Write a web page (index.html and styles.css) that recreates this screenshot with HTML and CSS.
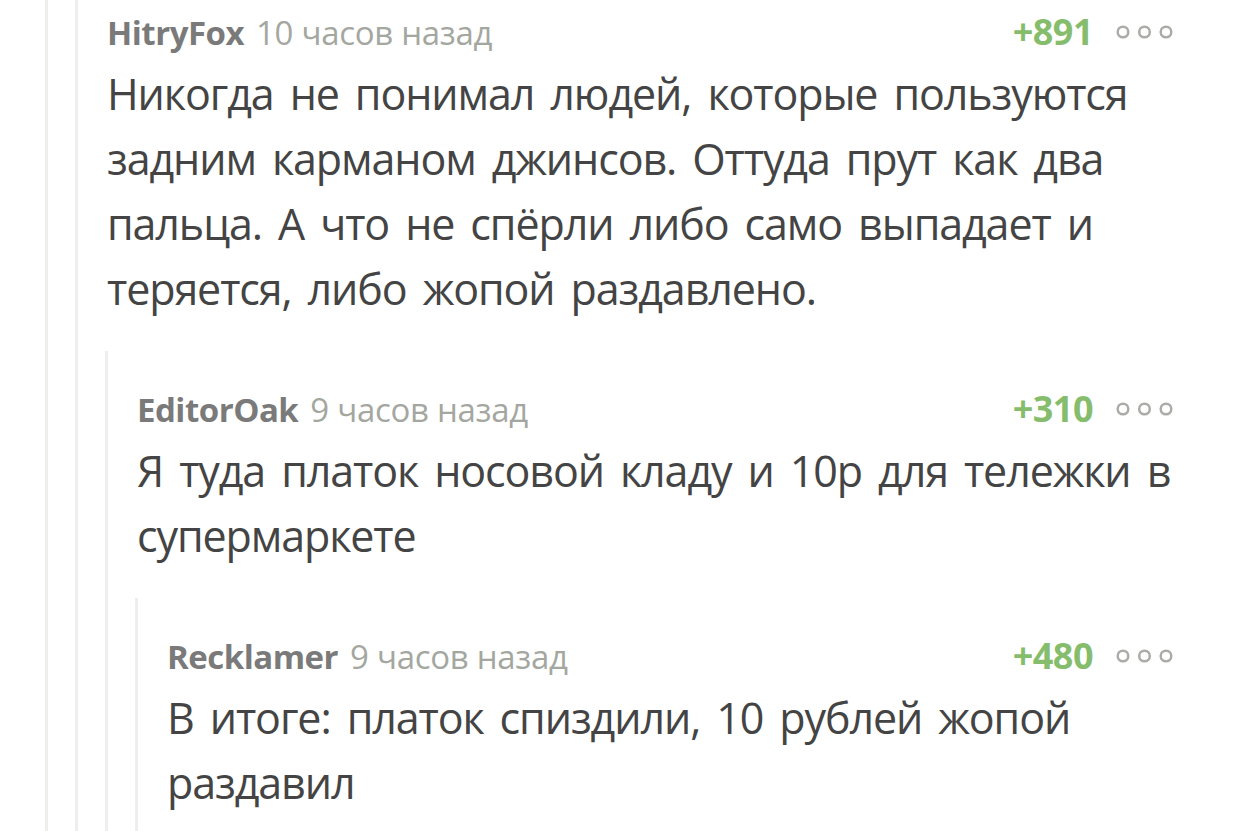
FILE: index.html
```html
<!DOCTYPE html>
<html lang="ru">
<head>
  <meta charset="UTF-8" />
  <meta name="viewport" content="width=device-width, initial-scale=1.0"/>
  <title>Комментарии</title>
  <link rel="stylesheet" href="styles.css">
</head>
<body>
  <div class="page">
    <div class="branch">
      <div class="branch">
        <div class="thread">

          <div class="comment">
            <div class="comment-header">
              <span class="author">HitryFox</span>
              <span class="time">10 часов назад</span>
              <span class="rating">+891</span>
              <svg class="more" width="58" height="16" viewBox="0 0 58 16">
                <circle cx="7" cy="8" r="5.3" />
                <circle cx="28.5" cy="8" r="5.3" />
                <circle cx="50" cy="8" r="5.3" />
              </svg>
            </div>
            <div class="comment-body">Никогда не понимал людей, которые пользуются задним карманом джинсов. Оттуда прут как два пальца. А что не спёрли либо само выпадает и теряется, либо жопой раздавлено.</div>
          </div>

          <div class="branch">
            <div class="comment">
              <div class="comment-header">
                <span class="author">EditorOak</span>
                <span class="time">9 часов назад</span>
                <span class="rating">+310</span>
                <svg class="more" width="58" height="16" viewBox="0 0 58 16">
                  <circle cx="7" cy="8" r="5.3" />
                  <circle cx="28.5" cy="8" r="5.3" />
                  <circle cx="50" cy="8" r="5.3" />
                </svg>
              </div>
              <div class="comment-body">Я туда платок носовой кладу и 10р для тележки в супермаркете</div>
            </div>

            <div class="branch">
              <div class="comment">
                <div class="comment-header">
                  <span class="author">Recklamer</span>
                  <span class="time">9 часов назад</span>
                  <span class="rating">+480</span>
                  <svg class="more" width="58" height="16" viewBox="0 0 58 16">
                    <circle cx="7" cy="8" r="5.3" />
                    <circle cx="28.5" cy="8" r="5.3" />
                    <circle cx="50" cy="8" r="5.3" />
                  </svg>
                </div>
                <div class="comment-body">В итоге: платок спиздили, 10 рублей жопой раздавил</div>
              </div>
            </div>
          </div>

        </div>
      </div>
    </div>
  </div>
</body>
</html>
```

FILE: styles.css
```css
html, body {
  margin: 0;
  padding: 0;
  background: #ffffff;
  height: 100%;
  overflow: hidden;
}
body {
  font-family: 'Open Sans', 'Noto Sans', sans-serif;
  color: #444444;
}
.page {
  padding: 0 68px 0 45px;
  height: 100%;
}
.branch {
  border-left: 3px solid #eeeeec;
  padding-left: 27px;
  min-height: 100%;
}
.thread {
  margin-top: -26px;
}
.comment {
  padding: 33px 0 30px 2px;
}
.comment-header {
  display: flex;
  align-items: baseline;
  line-height: 50px;
  height: 50px;
}
.author {
  font-size: 33px;
  font-weight: 700;
  color: #7a7a7a;
  letter-spacing: -0.5px;
  margin-right: 12px;
}
.time {
  font-size: 33px;
  color: #a4a79f;
  letter-spacing: -0.3px;
}
.rating {
  margin-left: auto;
  font-size: 36px;
  font-weight: 700;
  color: #86bd6d;
  letter-spacing: -0.5px;
}
.more {
  margin-left: 23px;
  align-self: center;
  fill: none;
  stroke: #aaaca7;
  stroke-width: 2.5;
}
.comment-body {
  margin-top: 4px;
  font-size: 43px;
  line-height: 65px;
  letter-spacing: -1.1px;
  word-spacing: 6px;
}
```
